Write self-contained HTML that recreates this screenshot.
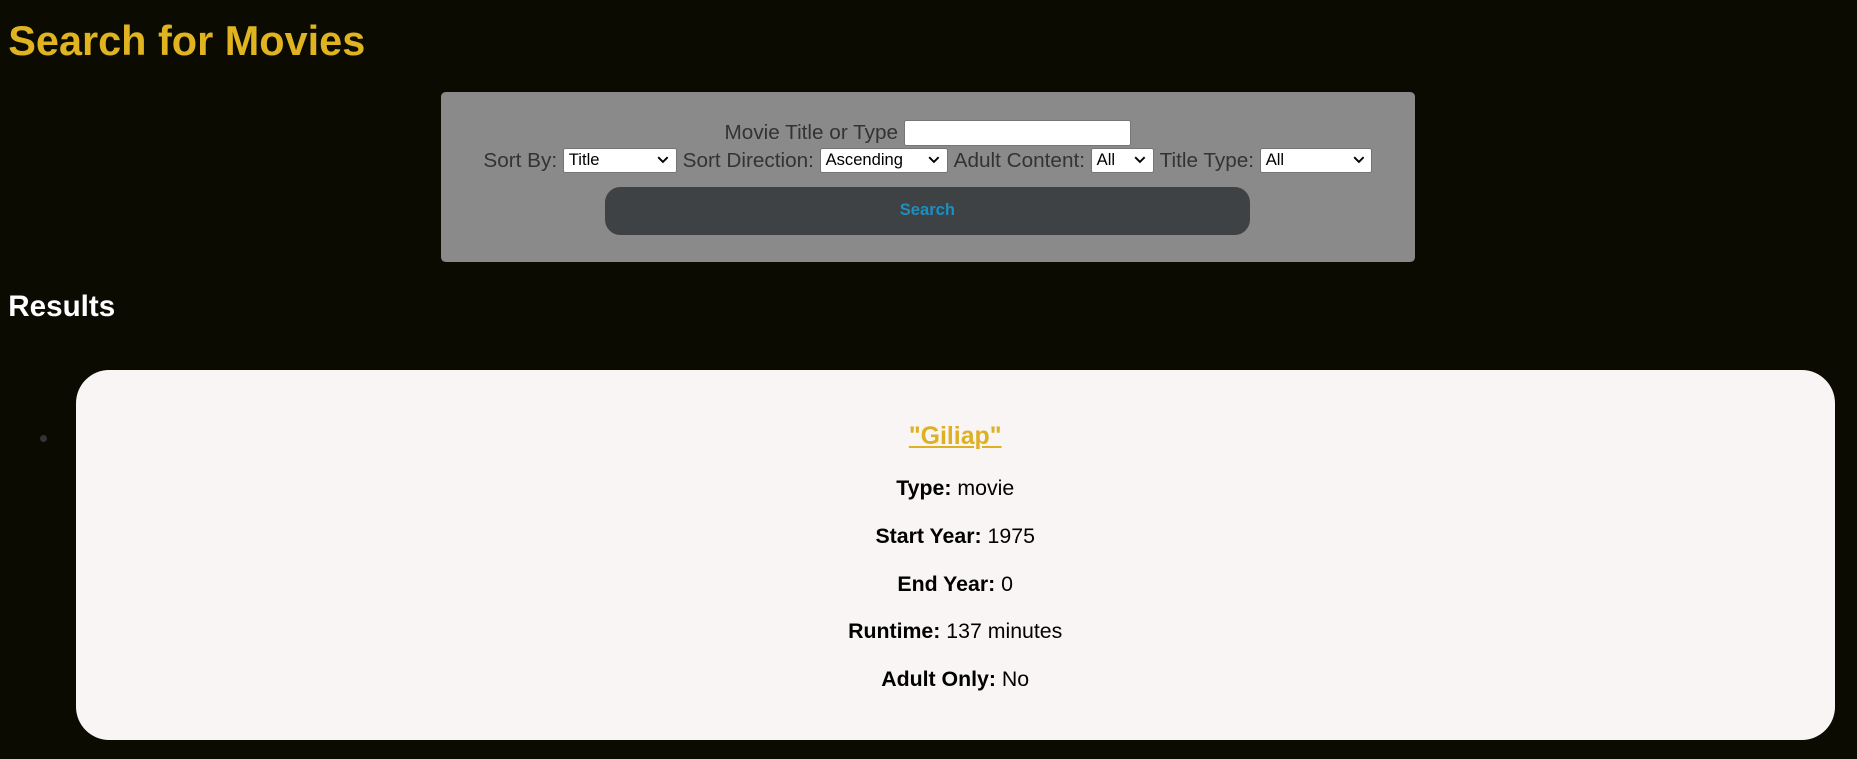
<!DOCTYPE html>
<html><head><meta charset="utf-8"><style>
html,body{margin:0;padding:0;background:#0b0b02;width:1857px;height:759px;overflow:hidden}
#w{zoom:1.184375;position:relative;width:1568px;height:641px;font-family:Arial,"Liberation Sans",Helvetica,sans-serif}
.a{position:absolute;white-space:nowrap}
h1{position:absolute;left:7px;top:15px;margin:0;font-size:35px;font-weight:bold;color:#e0b420;line-height:38px}
h2{position:absolute;left:7px;top:244px;margin:0;font-size:25px;font-weight:bold;color:#fff;line-height:30px}
#panel{position:absolute;left:372px;top:78px;width:823px;height:143px;background:#8a8a8a;border-radius:4px}
.row{position:absolute;left:0;right:0;display:flex;justify-content:center;align-items:center;gap:5px;white-space:nowrap}
.lbl{color:#333;font-size:17.5px;line-height:20px}
.box{position:relative;background:#fff;border:1px solid #767676;box-sizing:border-box;border-radius:2px;font-size:14px;color:#000;line-height:18px;padding-left:4px;text-align:left}
.box svg{position:absolute;right:6px;top:6px}
#btn{position:absolute;left:139px;top:80px;width:544px;height:40px;background:#3e4245;border-radius:13px;color:#1a8fc0;font-weight:bold;font-size:14px;text-align:center;line-height:38px}
#card{position:absolute;left:64px;top:312px;width:1485px;height:313px;background:#f9f5f4;border-radius:28px;text-align:center;color:#000}
#card .t{position:absolute;left:0;right:0;top:44px;font-size:21px;font-weight:bold;color:#deb023;text-decoration:underline;line-height:24px}
#card p{position:absolute;left:0;right:0;margin:0;font-size:18px;line-height:22px}
</style></head><body><div id="w">
<h1>Search for Movies</h1>
<div id="panel">
 <div class="row" style="top:23px"><span class="lbl">Movie Title or Type</span><div class="box" style="width:192px;height:22px"></div></div>
 <div class="row" style="top:47px">
 <span class="lbl">Sort By:</span>
 <div class="box" style="width:96px;height:21px">Title<svg width="10" height="7"><path d="M1 1l4 4 4-4" stroke="#000" stroke-width="1.6" fill="none"/></svg></div>
 <span class="lbl">Sort Direction:</span>
 <div class="box" style="width:108px;height:21px">Ascending<svg width="10" height="7"><path d="M1 1l4 4 4-4" stroke="#000" stroke-width="1.6" fill="none"/></svg></div>
 <span class="lbl">Adult Content:</span>
 <div class="box" style="width:53px;height:21px">All<svg width="10" height="7"><path d="M1 1l4 4 4-4" stroke="#000" stroke-width="1.6" fill="none"/></svg></div>
 <span class="lbl">Title Type:</span>
 <div class="box" style="width:95px;height:21px">All<svg width="10" height="7"><path d="M1 1l4 4 4-4" stroke="#000" stroke-width="1.6" fill="none"/></svg></div>
 </div>
 <div id="btn">Search</div>
</div>
<h2>Results</h2>
<div class="a" style="left:34px;top:367px;width:6px;height:6px;border-radius:50%;background:#333"></div>
<div id="card">
 <div class="t">"Giliap"</div>
 <p style="top:89px"><b>Type:</b> movie</p>
 <p style="top:130px"><b>Start Year:</b> 1975</p>
 <p style="top:170px"><b>End Year:</b> 0</p>
 <p style="top:210px"><b>Runtime:</b> 137 minutes</p>
 <p style="top:250px"><b>Adult Only:</b> No</p>
</div>
</div></body></html>
